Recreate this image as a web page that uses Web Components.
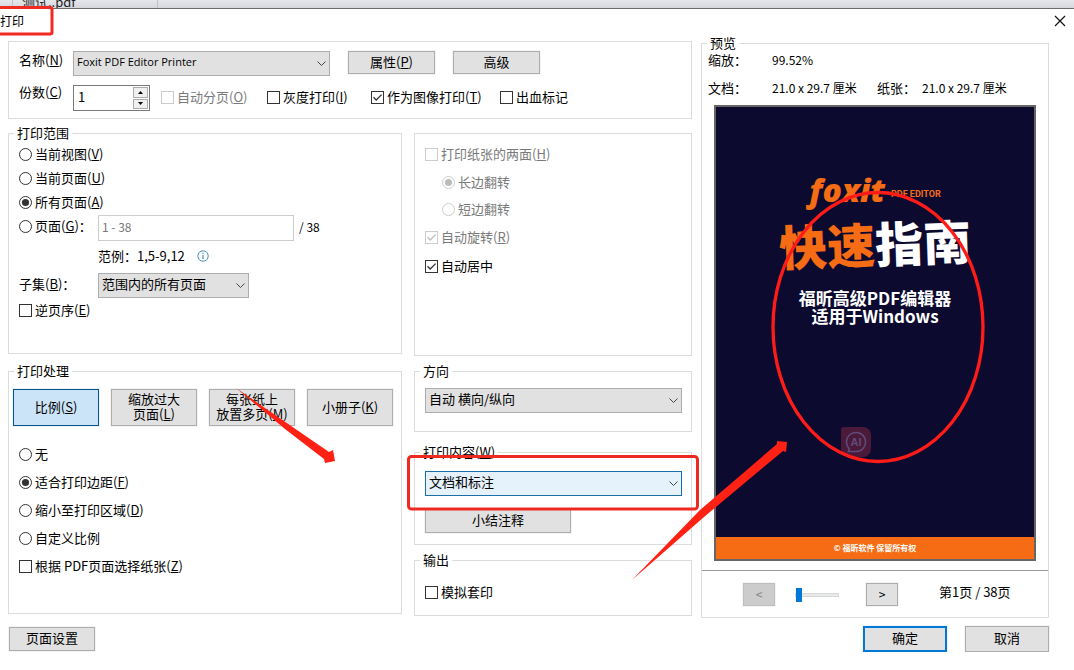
<!DOCTYPE html>
<html lang="zh-CN">
<head>
<meta charset="utf-8">
<title>打印</title>
<style>
html,body{margin:0;background:#fff}
body{font:13px/16px "Noto Sans CJK SC",sans-serif;color:#000;overflow-x:hidden}
</style>
</head>
<body>
<print-dialog></print-dialog>
<script>
const define = (name, html, setup) => {
  const tpl = document.createElement('template');
  tpl.innerHTML = html;
  customElements.define(name, class extends HTMLElement {
    constructor() {
      super();
      this.attachShadow({ mode: 'open' }).append(tpl.content.cloneNode(true));
    }
    connectedCallback() { if (setup) setup(this, this.shadowRoot); }
  });
};

/* Framed group with an optional caption on its border */
define('ui-group', `
<style>
:host{display:block}
fieldset{box-sizing:border-box;height:100%;margin:0;padding:0;border:1px solid #dcdcdc;min-width:0;display:flow-root}
legend{margin-left:5px;padding:0 3px;line-height:20px;height:20px}
</style>
<fieldset><legend><slot name="caption"></slot></legend><slot></slot></fieldset>`,
(el, root) => { if (el.hasAttribute('plain')) root.querySelector('legend')?.remove(); });

/* Tick box or radio button with its label */
define('ui-choice', `
<style>
:host{display:block}
label{display:flex;align-items:center;gap:3px;height:24px;white-space:nowrap}
span{position:relative;display:block;width:13px;height:13px;flex:none}
input{appearance:none;display:block;box-sizing:border-box;width:13px;height:13px;margin:0;border:1px solid #333;background:#fff}
input[type=radio]{border-radius:50%}
svg{position:absolute;inset:0;display:none;pointer-events:none;color:#333}
input[type=checkbox]:checked~.tick,input[type=radio]:checked~.dot{display:block}
:host([disabled]) label{color:#7a7a7a}
:host([disabled]) input{border-color:#ccc}
:host([disabled]) svg{color:#bcbcbc}
</style>
<label><span><input><svg class="tick" width="13" height="13" viewBox="0 0 13 13"><path d="M2.5 6.3 5.2 9 10.6 3.6" fill="none" stroke="currentColor" stroke-width="1.3"/></svg><svg class="dot" width="13" height="13" viewBox="0 0 13 13"><circle cx="6.5" cy="6.5" r="3.6" fill="currentColor"/></svg></span><b style="font-weight:inherit"><slot></slot></b></label>`,
(el, root) => {
  const i = root.querySelector('input');
  i.type = el.getAttribute('type') || 'checkbox';
  i.checked = el.hasAttribute('checked');
  i.disabled = el.hasAttribute('disabled');
});

define('ui-button', `
<style>
:host{display:block;height:23px}
button{box-sizing:border-box;width:100%;height:100%;margin:0;padding:0 0 3px;border:1px solid #adadad;background:#e1e1e1;font:inherit;line-height:15px;color:#000;box-shadow:0 0 0 1px #f4f4f4}
:host([selected]) button{background:#cce4f7;border-color:#00548f}
:host([primary]) button{border:2px solid #0078d7}
button:disabled{background:#ccc;border-color:#bfbfbf;color:#838383}
</style>
<button type="button"><slot></slot></button>`,
(el, root) => { root.querySelector('button').disabled = el.hasAttribute('disabled'); });

define('ui-select', `
<style>
:host{display:block;position:relative;height:25px}
select{appearance:none;box-sizing:border-box;width:100%;height:100%;margin:0;padding:0 24px 4px 3px;border:1px solid #adadad;border-radius:0;background:#e1e1e1;font:inherit;color:#000}
:host([active]) select{background:#e5f1fb;border-color:#1a6fa8}
svg{position:absolute;right:4px;top:9px;pointer-events:none}
</style>
<select><option></option></select>
<svg width="9" height="8" viewBox="0 0 9 8"><path d="M.5 1.5 4.5 5.5 8.500 1.500" fill="none" stroke="#444"/></svg>`,
(el, root) => {
  root.querySelector('option').textContent = el.getAttribute('value');
  root.querySelector('select').setAttribute('aria-label', el.getAttribute('label'));
});

define('ui-spin', `
<style>
:host{display:flex;box-sizing:border-box;width:77px;height:26px;border:1px solid #7a7a7a;background:#fff}
input{flex:1;min-width:0;border:0;margin:0;padding:0 4px 3px;font:inherit;outline:0;background:none}
div{display:flex;flex-direction:column;gap:1px;width:15px;padding:1px}
button{flex:1;display:grid;place-items:center;min-height:0;margin:0;padding:0;border:1px solid #adadad;background:#f0f0f0}
svg{display:block}
</style>
<input value="1" aria-label="份数">
<div><button type="button" aria-label="增加"><svg width="5" height="3"><path d="M0 3 2.500 0 5 3z"/></svg></button>
<button type="button" aria-label="减少"><svg width="5" height="3"><path d="M0 0 2.500 3 5 0z"/></svg></button></div>`);

define('tab-strip', `
<style>
:host{display:flex;box-sizing:border-box;height:9px;overflow:hidden;background:linear-gradient(#e6e7ec,#d6d7dd);border-bottom:1px solid #6c6c6c}
a{box-sizing:border-box;width:146px;margin-left:12px;padding-left:9px;border:solid #c0c1c8;border-width:0 1px;line-height:4px;color:#222;text-decoration:none}
</style>
<a href="#">测试..pdf</a>`);

/* Cover of the document, as the preview shows it */
define('cover-page', `
<style>
:host{position:relative;display:flex;flex-direction:column;box-sizing:border-box;height:456px;border:2px solid #666;background:#0d0a30;color:#fff;font-weight:700;text-align:center;overflow:hidden}
.brand{display:flex;justify-content:center;align-items:center;gap:6px;height:40px;margin-top:63px;line-height:40px;color:#f56c14;white-space:nowrap}
.logo{font:italic 800 32px/40px "Open Sans",sans-serif}
.edition{font:700 9px/12px "Liberation Sans Narrow",Roboto,sans-serif;padding-top:8px}
h1{margin:0;font-size:48px;line-height:64px;font-weight:900;transform:rotate(-2deg)}
h1 em{font-style:normal;color:#f56c14}
p{margin:15px 0 0;font-size:17px;line-height:18px}
.ai{position:absolute;left:125px;top:320px}
footer{margin-top:auto;height:22px;background:#f56c14;font-size:8px;line-height:22px}
</style>
<div class="brand"><span class="logo">foxit</span><span class="edition">PDF EDITOR</span></div>
<h1><em>快速</em>指南</h1>
<p>福昕高级PDF编辑器<br>适用于Windows</p>
<svg class="ai" width="30" height="30" viewBox="0 0 30 30"><path d="M3 0h19a8 8 0 0 1 8 8v14a8 8 0 0 1-8 8H8a8 8 0 0 1-8-8V3a3 3 0 0 1 3-3z" fill="#4b1a3a"/><path d="M7.500 24.500H15A9.500 9.500 0 1 0 7.500 20.800Q9 22.500 7.500 24.500z" fill="none" stroke="#5f4b78" stroke-width="1.600"/><text x="15" y="19" font-family="Liberation Sans" font-size="11" font-weight="700" text-anchor="middle" fill="#5f4b78">AI</text></svg>
<footer>© 福昕软件 保留所有权</footer>`);

define('preview-pane', `
<style>
:host{display:block}
ui-group{height:100%}
dl{display:grid;grid-template-columns:64px 105px 45px 1fr;margin:0 0 0 6px;line-height:28px;height:52px;grid-auto-rows:28px;white-space:nowrap}
dd{margin:0;font-size:12px}
dt{margin:0}
dl>*{margin-top:-7px}
.wide{grid-column:span 3}
cover-page{margin:0 12px}
nav{display:flex;align-items:center;height:47px;margin-top:9px;border-top:1px solid #999;padding-left:41px}
ui-button{width:32px;font-size:12px}
input{appearance:none;width:44px;height:14px;margin:0 27px 0 20px;background:none}
input::-webkit-slider-runnable-track{box-sizing:border-box;height:4px;border:1px solid #d6d6d6;background:#e7eaea}
input::-webkit-slider-thumb{appearance:none;width:6px;height:14px;margin-top:-6px;background:#0078d7}
output{margin-left:41px;padding-bottom:5px;white-space:nowrap}
</style>
<ui-group><span slot="caption">预览</span>
<dl><dt>缩放：</dt><dd class="wide">99.52%</dd><dt>文档：</dt><dd>21.0 x 29.7 厘米</dd><dt>纸张：</dt><dd>21.0 x 29.7 厘米</dd></dl>
<cover-page></cover-page>
<nav><ui-button disabled>&lt;</ui-button><input type="range" min="1" max="38" value="1" aria-label="页码"><ui-button>&gt;</ui-button><output>第1页 / 38页</output></nav>
</ui-group>`);

/* Red pen marks that lie over the dialog */
define('pen-marks', `
<style>:host{position:absolute;left:0;top:0;pointer-events:none}svg{display:block}</style>
<svg width="1074" height="670" viewBox="0 0 1074 670" fill="none">
<rect x="-5" y="7.500" width="57" height="26.500" rx="2" stroke="#f02a20" stroke-width="3"/>
<rect x="408.500" y="456.500" width="289" height="52.500" rx="3" stroke="#ee2a20" stroke-width="3"/>
<ellipse cx="878" cy="327" rx="105" ry="134.500" stroke="#ff1c18" stroke-width="3.300"/>
<g fill="#ff2113"><path d="M236 388 329 452 333 450 335 461 325 463 324 459 285 429z"/><path d="M632 580 700 510 777 444 777 441 787 442 786 452 783 451 704 517z"/></g>
</svg>`);

define('print-dialog', `
<style>
:host{display:block;position:relative;overflow:hidden}
header{display:flex;justify-content:space-between;align-items:center;height:24px;padding-right:8px}
h2{margin:0;font-size:12px;font-weight:400}
.close{display:block;padding:0;border:0;background:none}
.close svg{display:block}
main{display:grid;grid-template-columns:minmax(0,1fr) 348px;column-gap:9px;padding:0 25px 0 8px}
.options{display:grid;grid-template-columns:minmax(0,1fr) 278px;column-gap:12px;align-content:start;padding-top:8px}
.printer{grid-column:1/-1;height:78px}
.line{display:flex;gap:18px;padding:9px 10px 0;height:25px}
.line ui-button{width:87px}
.name{width:54px;line-height:18px;margin-right:-18px;white-space:nowrap}
.line ui-select{width:257px;font-size:11px;font-family:"Open Sans",sans-serif}
.copies{display:grid;grid-template-columns:54px 88px 106px 104px 129px auto;padding:9px 10px 0}
.copies .name{line-height:14px;margin:0}
.col{display:flex;flex-direction:column}
.range{margin-top:4px;height:231px}
.process{margin-top:7px;height:253px}
.in{padding:0 10px}
.range .in{margin-top:-1px}
.field{display:grid;grid-template-columns:79px 1fr;height:28px}
.field>label,.field>span{line-height:28px;white-space:nowrap}
.pages{display:flex;gap:5px;padding-top:1px;font-size:12px;line-height:24px}
.pages input{box-sizing:border-box;width:196px;height:26px;margin:0;padding:0 4px 4px 3px;border:1px solid #ccc;font:inherit}
.pages input::placeholder{color:#777}
.hint{display:flex;align-items:center;gap:12px}
.field ui-select{width:151px;margin-top:3px}
.modes{display:grid;grid-template-columns:repeat(4,minmax(0,1fr));gap:12px;padding:8px 8px 0 4px}
.modes ui-button{height:37px}
.scale{display:grid;grid-auto-rows:28px;align-items:center;padding:14px 10px 0}
.duplex{margin-top:14px;height:223px}
.sides{display:grid;grid-template-rows:28px 28px 26px 30px 28px;align-items:center;padding:6px 10px}
.sides .sub{padding-left:17px}
.orient{margin-top:5px;height:71px}
.content{margin-top:10px;height:103px}
.output{margin-top:5px;height:66px}
.in.drop{padding-top:7px;padding-right:9px}
.content .drop{padding-top:9px}
.content ui-button{width:146px;height:24px;margin-top:13px}
.output ui-choice{padding-top:10px}
preview-pane{margin-top:0;height:585px}
.actions{display:flex;align-items:center;gap:18px;padding:8px 25px 0 9px}
.actions ui-button{width:84px;height:26px}
.actions .setup{width:86px;height:24px;margin-right:auto}
</style>
<tab-strip></tab-strip>
<header><h2>打印</h2><button class="close" type="button" aria-label="关闭"><svg width="12" height="12" viewBox="0 0 12 12"><path d="M1 1 11 11M11 1 1 11" stroke="#111" stroke-width="1.200"/></svg></button></header>
<main>
<div class="options">
<ui-group plain class="printer">
  <div class="line"><span class="name">名称(<u>N</u>)</span><ui-select label="名称" value="Foxit PDF Editor Printer"></ui-select><ui-button>属性(<u>P</u>)</ui-button><ui-button>高级</ui-button></div>
  <div class="copies"><span class="name">份数(<u>C</u>)</span><ui-spin></ui-spin><ui-choice disabled>自动分页(<u>O</u>)</ui-choice><ui-choice>灰度打印(<u>I</u>)</ui-choice><ui-choice checked>作为图像打印(<u>T</u>)</ui-choice><ui-choice>出血标记</ui-choice></div>
</ui-group>
<div class="col">
  <ui-group class="range"><span slot="caption">打印范围</span>
    <div class="in">
      <ui-choice type="radio">当前视图(<u>V</u>)</ui-choice>
      <ui-choice type="radio">当前页面(<u>U</u>)</ui-choice>
      <ui-choice type="radio" checked>所有页面(<u>A</u>)</ui-choice>
      <div class="field"><ui-choice type="radio">页面(<u>G</u>)：</ui-choice><div class="pages"><input placeholder="1 - 38" aria-label="页面"><span>/ 38</span></div></div>
      <div class="field"><span></span><div class="hint"><span>范例：1,5-9,12</span><svg width="12" height="12" viewBox="0 0 12 12"><circle cx="6" cy="6" r="5.200" fill="none" stroke="#4a93bd"/><path d="M6 5v4M6 2.700v1.300" stroke="#4a93bd" stroke-width="1.200"/></svg></div></div>
      <div class="field"><span>子集(<u>B</u>)：</span><ui-select label="子集" value="范围内的所有页面"></ui-select></div>
      <ui-choice>逆页序(<u>E</u>)</ui-choice>
    </div>
  </ui-group>
  <ui-group class="process"><span slot="caption">打印处理</span>
    <div class="modes"><ui-button selected>比例(<u>S</u>)</ui-button><ui-button>缩放过大<br>页面(<u>L</u>)</ui-button><ui-button>每张纸上<br>放置多页(<u>M</u>)</ui-button><ui-button>小册子(<u>K</u>)</ui-button></div>
    <div class="scale">
      <ui-choice type="radio">无</ui-choice>
      <ui-choice type="radio" checked>适合打印边距(<u>F</u>)</ui-choice>
      <ui-choice type="radio">缩小至打印区域(<u>D</u>)</ui-choice>
      <ui-choice type="radio">自定义比例</ui-choice>
      <ui-choice>根据 PDF页面选择纸张(<u>Z</u>)</ui-choice>
    </div>
  </ui-group>
</div>
<div class="col">
  <ui-group plain class="duplex"><div class="sides">
    <ui-choice disabled>打印纸张的两面(<u>H</u>)</ui-choice>
    <ui-choice class="sub" type="radio" checked disabled>长边翻转</ui-choice>
    <ui-choice class="sub" type="radio" disabled>短边翻转</ui-choice>
    <ui-choice checked disabled>自动旋转(<u>R</u>)</ui-choice>
    <ui-choice checked>自动居中</ui-choice>
  </div></ui-group>
  <ui-group class="orient"><span slot="caption">方向</span><div class="in drop"><ui-select label="方向" value="自动 横向/纵向"></ui-select></div></ui-group>
  <ui-group class="content"><span slot="caption">打印内容(<u>W</u>)</span><div class="in drop"><ui-select active label="打印内容" value="文档和标注"></ui-select><ui-button>小结注释</ui-button></div></ui-group>
  <ui-group class="output"><span slot="caption">输出</span><div class="in"><ui-choice>模拟套印</ui-choice></div></ui-group>
</div>
</div>
<preview-pane></preview-pane>
</main>
<div class="actions"><ui-button class="setup">页面设置</ui-button><ui-button primary>确定</ui-button><ui-button>取消</ui-button></div>
<pen-marks></pen-marks>`);
</script>
</body>
</html>
